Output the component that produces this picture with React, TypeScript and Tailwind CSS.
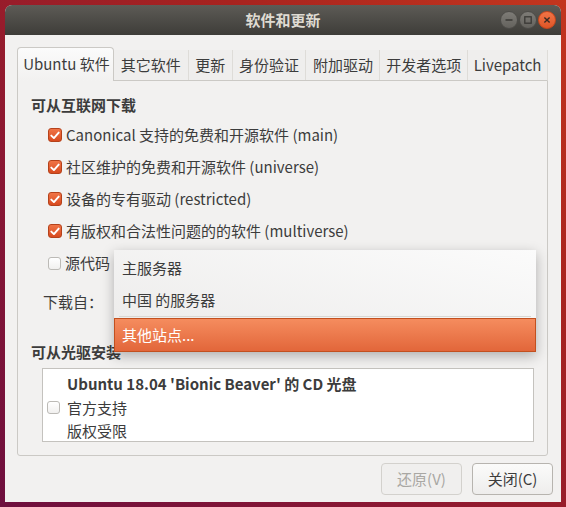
import React from 'react'

const font = { fontFamily: '"Noto Sans CJK SC", "Noto Sans", sans-serif' }

function Checked() {
  return (
    <span className="flex h-[14px] w-[14px] shrink-0 items-center justify-center rounded-[3px] border border-[#b5421b] bg-gradient-to-b from-[#f07446] to-[#d84a1e]">
      <svg width="10" height="9" viewBox="0 0 10 9">
        <path d="M1.3 4.6 L3.9 7.1 L8.7 1.6" fill="none" stroke="#ffffff" strokeWidth="1.9" strokeLinecap="round" strokeLinejoin="round" />
      </svg>
    </span>
  )
}

function Unchecked() {
  return <span className="block h-[13px] w-[13px] shrink-0 rounded-[3px] border border-[#bcbab6] bg-gradient-to-b from-[#ffffff] to-[#f1f0ef]" />
}

function Row({ checked, children }: { checked: boolean; children: React.ReactNode }) {
  return (
    <div className="flex h-[32px] items-center gap-[4px] pl-[17px]">
      {checked ? <Checked /> : <Unchecked />}
      <span>{children}</span>
    </div>
  )
}

const tabs = [
  { label: 'Ubuntu 软件', w: 'w-[97px]' },
  { label: '其它软件', w: 'w-[75px]' },
  { label: '更新', w: 'w-[44px]' },
  { label: '身份验证', w: 'w-[74px]' },
  { label: '附加驱动', w: 'w-[74px]' },
  { label: '开发者选项', w: 'w-[88px]' },
  { label: 'Livepatch', w: 'w-[80px]' },
]

function TitleButton({ kind }: { kind: 'min' | 'max' | 'close' }) {
  const close = kind === 'close'
  return (
    <span
      className={`flex h-[18px] w-[18px] items-center justify-center rounded-full border ${
        close
          ? 'border-[#c8461c] bg-gradient-to-b from-[#f27446] to-[#de5526]'
          : 'border-[#4d4c48] bg-gradient-to-b from-[#7e7c77] to-[#64625d]'
      }`}
    >
      <svg width="10" height="10" viewBox="0 0 10 10">
        {kind === 'min' && <path d="M1.5 5 H8.5" stroke="#3a3935" strokeWidth="1.5" />}
        {kind === 'max' && <rect x="1.8" y="1.8" width="6.4" height="6.4" fill="none" stroke="#3a3935" strokeWidth="1.3" />}
        {close && <path d="M2.4 2.4 L7.6 7.6 M7.6 2.4 L2.4 7.6" stroke="#3a2a22" strokeWidth="1.4" />}
      </svg>
    </span>
  )
}

export default function App() {
  return (
    <div
      className="h-[507px] w-[566px] bg-[linear-gradient(to_top_right,#6e0f3e_0%,#8c1833_35%,#a7231f_70%,#c3361e_100%)] p-[5px] text-[15px] text-[#3c3c3c]"
      style={font}
    >
      <div className="flex h-[497px] w-[556px] flex-col overflow-hidden rounded-t-[7px] bg-[#f2f1f0]">
        {/* Title bar */}
        <div className="grid h-[30px] shrink-0 grid-cols-[1fr_auto_1fr] items-center bg-gradient-to-b from-[#5d5b56] to-[#3e3d39]">
          <div />
          <span className="text-[15px] font-bold text-[#dfdbd2]">软件和更新</span>
          <div className="flex justify-end gap-[1px] pr-[5px]">
            <TitleButton kind="min" />
            <TitleButton kind="max" />
            <TitleButton kind="close" />
          </div>
        </div>

        <div className="flex flex-1 flex-col pl-[12px] pr-[13px] pt-[12px]">
          {/* Tabs */}
          <div className="flex h-[33px] items-end">
            {tabs.map((t, i) =>
              i === 0 ? (
                <div
                  key={t.label}
                  className={`${t.w} relative z-10 -mb-px flex h-[34px] items-center justify-center rounded-t-[4px] border border-b-0 border-[#cbc9c5] bg-gradient-to-b from-[#fbfbfb] to-[#f2f1f0] pl-[2px]`}
                >
                  {t.label}
                </div>
              ) : (
                <div
                  key={t.label}
                  className={`${t.w} flex h-[30px] items-center justify-center border-r border-[#dedcd8] bg-[#efeeed] pt-[1px]`}
                >
                  {t.label}
                </div>
              )
            )}
          </div>

          {/* Panel */}
          <div className="relative flex h-[376px] flex-col rounded-b-[3px] border border-[#cbc9c5] bg-[#f2f1f0] px-[13px] pt-[14px]">
            <div className="flex h-[20px] items-center font-bold">可从互联网下载</div>
            <div className="mt-[4px]">
              <Row checked>Canonical 支持的免费和开源软件 (main)</Row>
              <Row checked>社区维护的免费和开源软件 (universe)</Row>
              <Row checked>设备的专有驱动 (restricted)</Row>
              <Row checked>有版权和合法性问题的的软件 (multiverse)</Row>
              <Row checked={false}>源代码</Row>
            </div>
            <div className="mt-[6px] flex h-[34px] items-center pl-[12px]">下载自：</div>
            <div className="mt-[23px] flex h-[20px] items-center font-bold">可从光驱安装</div>

            <div className="ml-[11px] mt-[6px] h-[74px] overflow-hidden border border-[#c4c2be] bg-white">
              <div className="flex items-center gap-[7px] pl-[4px] pt-[3px]">
                <Unchecked />
                <div className="flex flex-col leading-[23.5px]">
                  <span className="font-bold">Ubuntu 18.04 'Bionic Beaver' 的 CD 光盘</span>
                  <span>官方支持</span>
                  <span>版权受限</span>
                </div>
              </div>
            </div>

            {/* Dropdown menu */}
            <div className="absolute left-[96px] top-[169px] z-20 flex h-[102px] w-[422px] flex-col bg-gradient-to-tr from-[#ebeae9] to-[#fbfbfb] shadow-[0_4px_12px_rgba(0,0,0,0.28)]">
              <div className="flex h-[34px] items-center pl-[8px] pt-[2px]">主服务器</div>
              <div className="flex h-[32px] items-center pl-[8px]">中国 的服务器</div>
              <div className="mx-[5px] h-px bg-[#d9d7d3]" />
              <div className="mt-[1px] flex flex-1 items-center border border-[#c2501f] bg-gradient-to-b from-[#f58c5e] to-[#e2663a] pl-[7px] text-white">
                其他站点...
              </div>
            </div>
          </div>

          {/* Buttons */}
          <div className="mr-[-5px] mt-[7px] flex justify-end gap-[10px]">
            <div className="flex h-[32px] w-[81px] items-center justify-center rounded-[4px] border border-[#d3d1cd] bg-[#f0efee] text-[#a9a7a3]">
              还原(V)
            </div>
            <div className="flex h-[32px] w-[81px] items-center justify-center rounded-[4px] border border-[#b7b4af] bg-gradient-to-b from-[#fbfbfa] to-[#eeedec] text-[#3c3c3c]">
              关闭(C)
            </div>
          </div>
        </div>
      </div>
    </div>
  )
}
